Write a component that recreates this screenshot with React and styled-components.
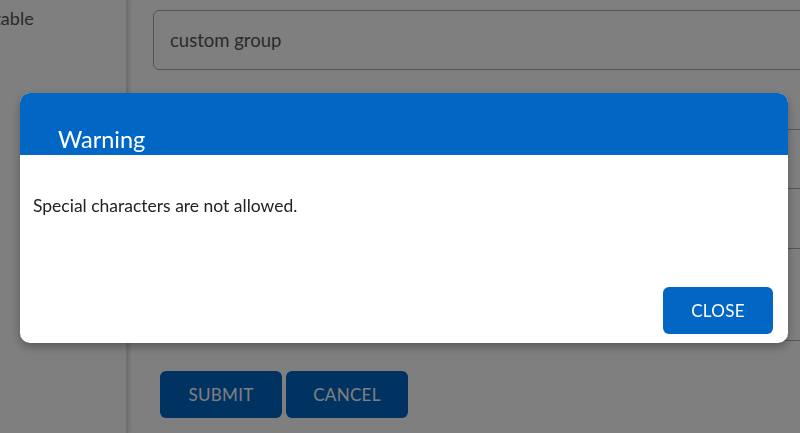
import React from 'react';
import styled, { createGlobalStyle } from 'styled-components';

/** global page reset */
const GlobalStyle = createGlobalStyle`
    html, body {
        margin: 0;
        padding: 0;
        background: #fff;
        font-family: Lato, "Noto Sans", sans-serif;
        overflow: hidden;
    }
`

/** page under the dialog */
const Page = styled.div`
    display: flex;
    width: 800px;
    height: 433px;
    overflow: hidden;
`
const Sidebar = styled.div`
    width: 126px;
    flex-shrink: 0;
    overflow: hidden;
    border-right: 2px solid #ddd;
    box-shadow: 2px 0 3px rgba(0, 0, 0, 0.12);
    z-index: 1;
    background: #fefefe;
`
const SideItem = styled.div`
    margin: 7px 0 0 -30px;
    font-size: 18px;
    line-height: 22px;
    color: #555;
    white-space: nowrap;
`
const Main = styled.div`
    flex: 1;
    padding: 10px 0 0 25px;
    display: flex;
    flex-direction: column;
    overflow: hidden;
`
const Fields = styled.div`
    display: flex;
    flex-direction: column;
    gap: 59px;
`
const Field = styled.div`
    width: 760px;
    height: ${props => props.tall ? 93 : 60}px;
    box-sizing: border-box;
    border: 1px solid #aaa;
    border-radius: 6px;
    padding: 0 16px;
    display: flex;
    align-items: ${props => props.tall ? 'flex-start' : 'center'};
    font-size: 18.5px;
    color: #555;
`
const Actions = styled.div`
    display: flex;
    gap: 4px;
    margin: 30px 0 0 7px;
`
const Button = styled.button`
    width: ${props => props.w || 122}px;
    height: 47px;
    border: none;
    border-radius: 6px;
    background: #0266c4;
    color: #fff;
    font-family: Lato, "Noto Sans", sans-serif;
    font-size: 17px;
    letter-spacing: 0.3px;
    text-transform: uppercase;
    cursor: pointer;
`

/** modal */
const Overlay = styled.div`
    position: fixed;
    inset: 0;
    background: rgba(0, 0, 0, 0.5);
    display: flex;
    align-items: center;
    justify-content: center;
    padding: 3px 0 0 8px;
    z-index: 10;
`
const Dialog = styled.div`
    width: 768px;
    height: 250px;
    background: #fff;
    border-radius: 10px;
    overflow: hidden;
    display: flex;
    flex-direction: column;
    box-shadow: 0 4px 10px rgba(0, 0, 0, 0.3);
`
const Header = styled.div`
    height: 62px;
    flex-shrink: 0;
    background: #0266c4;
    box-sizing: border-box;
    padding: 32px 0 0 38px;
`
const Title = styled.h2`
    margin: 0;
    font-size: 23.5px;
    font-weight: 400;
    line-height: 28px;
    color: #fff;
`
const Content = styled.div`
    flex: 1;
    padding: 41px 13px 0;
    font-size: 17.5px;
    line-height: 20px;
    color: #222;
`
const Footer = styled.div`
    display: flex;
    justify-content: flex-end;
    padding: 0 15px 9px;
`

const App = () => {
    return (
        <>
            <GlobalStyle />
            <Page>
                <Sidebar>
                    <SideItem>Editable</SideItem>
                </Sidebar>
                <Main>
                    <Fields>
                        <Field>custom group</Field>
                        <Field />
                        <Field tall />
                    </Fields>
                    <Actions>
                        <Button>Submit</Button>
                        <Button>Cancel</Button>
                    </Actions>
                </Main>
            </Page>
            <Overlay>
                <Dialog>
                    <Header>
                        <Title>Warning</Title>
                    </Header>
                    <Content>Special characters are not allowed.</Content>
                    <Footer>
                        <Button w={110}>Close</Button>
                    </Footer>
                </Dialog>
            </Overlay>
        </>
    )
}

export default App;
